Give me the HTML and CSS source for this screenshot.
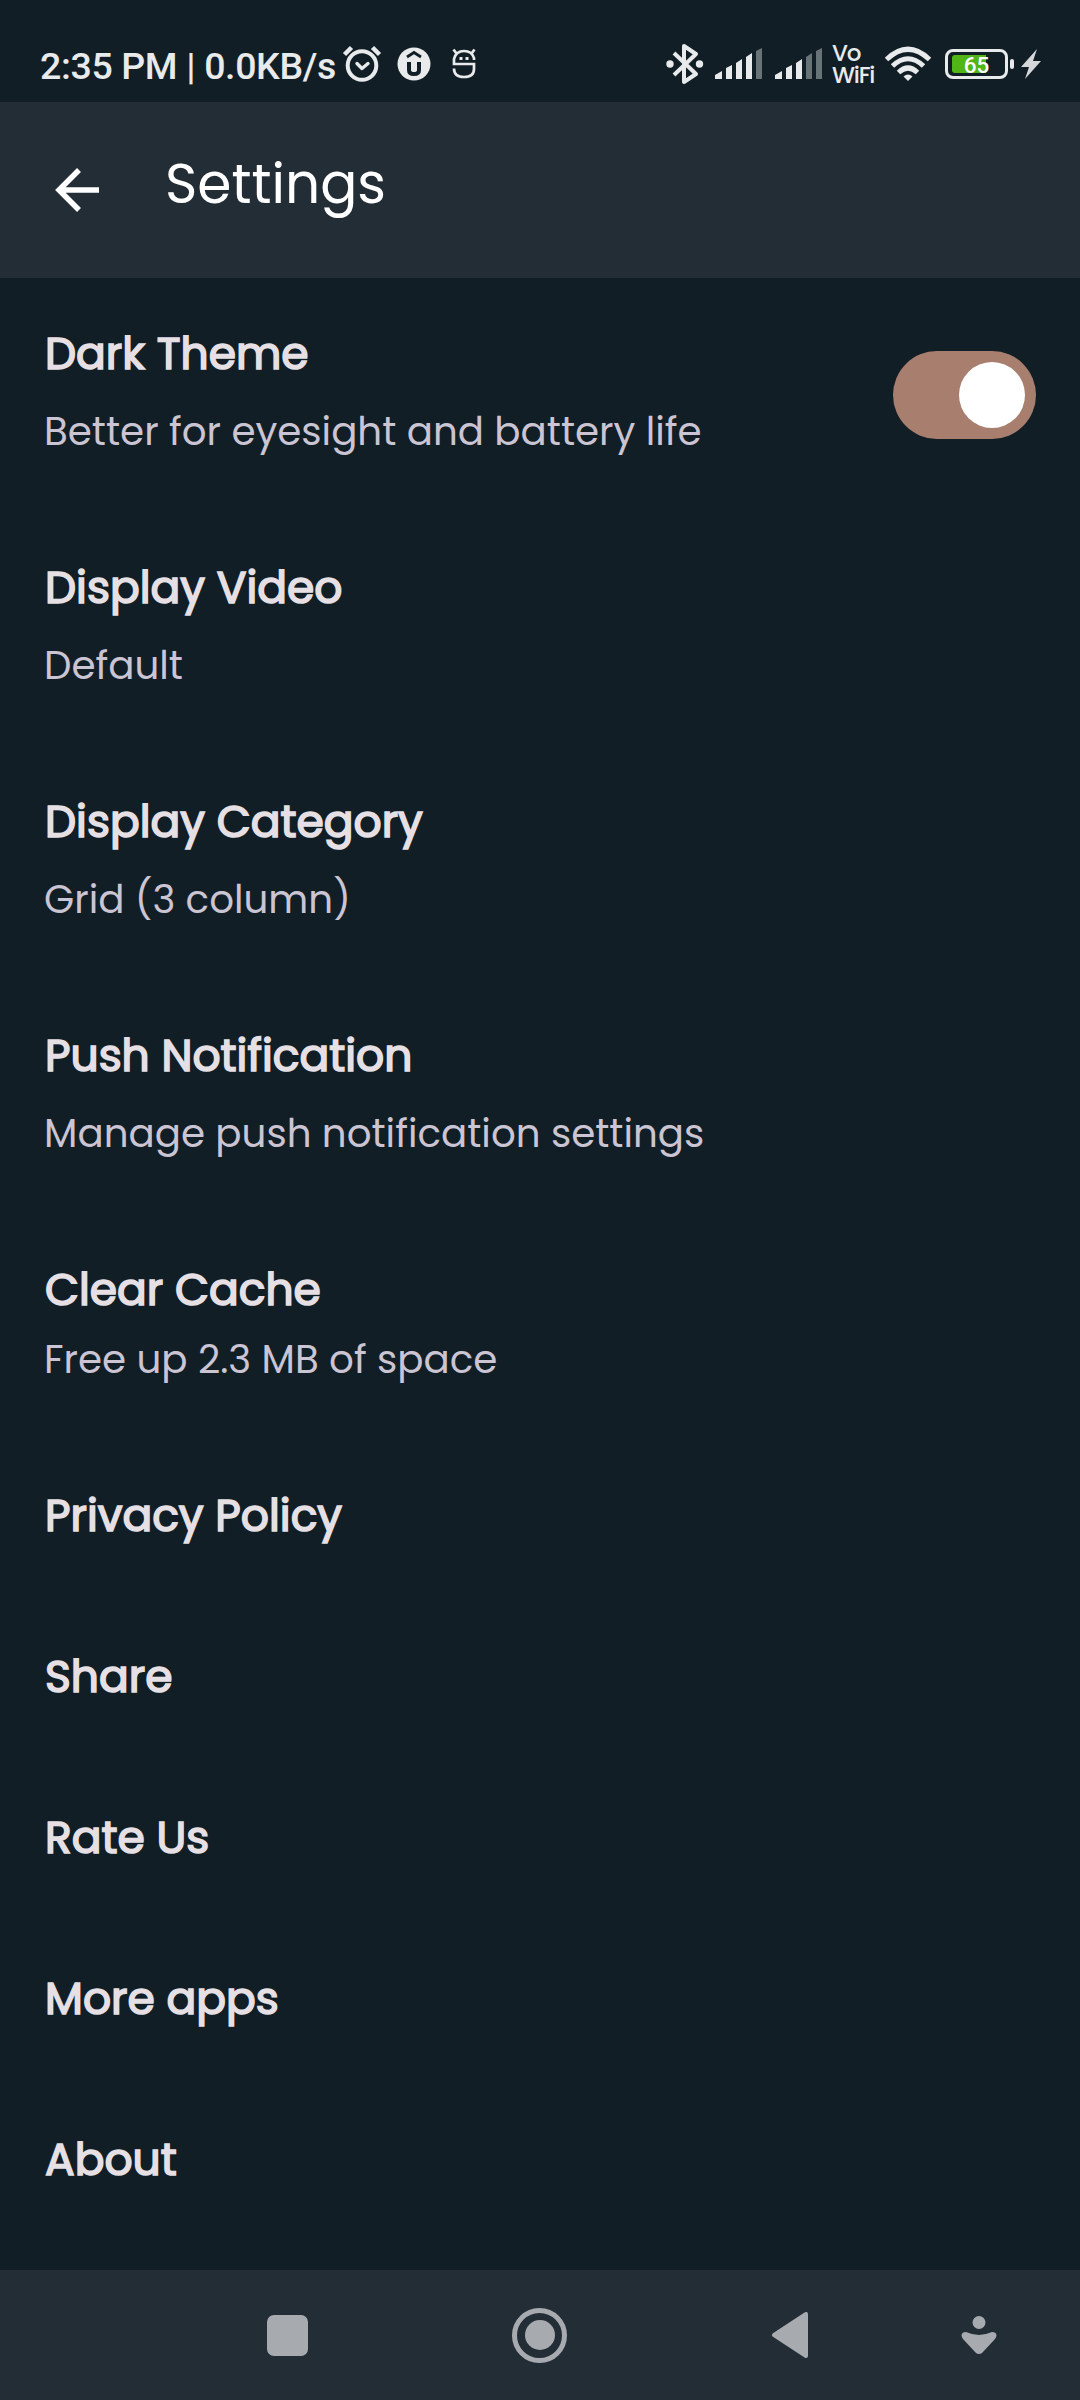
FILE: index.html
```html
<!DOCTYPE html>
<html lang="en">
<head>
<meta charset="utf-8">
<title>Settings</title>
<link rel="stylesheet" href="styles.css">
</head>
<body>
<div class="screen">
  <div class="status">
    <span class="clock">2:35 PM | 0.0KB/s</span>
    <svg class="alarm" width="40" height="40" viewBox="0 0 40 40" fill="none" stroke="#e8eaeb" stroke-linecap="round" stroke-linejoin="round"><circle cx="20" cy="21.500" r="14.300" stroke-width="4"/><path d="M2.500 10.500 9.500 3.500M37.500 10.500 30.500 3.500" stroke-width="4.500" stroke-linecap="butt"/><path d="m15 19.500 5 5 6-5" stroke-width="3.400"/></svg>
    <svg class="upload" width="34" height="34" viewBox="0 0 34 34"><circle cx="17" cy="17" r="16.500" fill="#e8eaeb"/><path d="M10 10 17 5.500l7 4.500" fill="none" stroke="#111e25" stroke-width="2.800"/><path d="M12 15v8q0 4 5 4t5-4v-8" fill="none" stroke="#111e25" stroke-width="4"/></svg>
    <svg class="bug" width="24" height="32" viewBox="0 0 24 32" fill="none" stroke="#e8eaeb" stroke-width="2.700"><path d="M22 12V10Q20 3 12 3T2 11v5h20v5q0 8-10 8T2 20.500M1.500 1.500l3 4M22.500 1.500l-3 4"/><path d="M7.500 10.500h3M13.500 10.500h3" stroke-width="3"/></svg>
    <span class="spacer"></span>
    <svg class="bt" width="38" height="42" viewBox="0 0 38 42" fill="none" stroke="#e8eaeb" stroke-width="4" stroke-linejoin="round"><path d="m8 10 22 21-12 8V3l12 8L8 32"/><circle cx="4" cy="21" r="3.700" fill="#e8eaeb" stroke="none"/><circle cx="33.500" cy="21" r="3.700" fill="#e8eaeb" stroke="none"/></svg>
    <svg class="sig" width="48" height="32" viewBox="0 0 48 32" fill="#e8eaeb"><path d="M0 27l7-4v8H0zM11 20l6-3v14h-6zM21 15l6-4v20h-6zM31 9l6-4v26h-6z"/><path d="M41 3l6-3v31h-6z" fill="#687378"/></svg>
    <svg class="sig2" width="48" height="32" viewBox="0 0 48 32" fill="#e8eaeb"><path d="M0 27l7-4v8H0zM11 20l6-3v14h-6zM21 15l6-4v20h-6z"/><path d="M31 9l6-4v26h-6zM41 3l6-3v31h-6z" fill="#687378"/></svg>
    <span class="vowifi"><span>Vo</span><span>WiFi</span></span>
    <svg class="wifi" width="48" height="36" viewBox="0 0 48 36" fill="none" stroke="#e8eaeb" stroke-width="5"><path d="M2.500 13.500Q24-7 45.500 13.500M8.500 20Q24 5.500 39.500 20M14.500 26.500Q24 17.500 33.500 26.500"/><path d="m24 35-4.500-4.500q4.500-4 9 0z" fill="#e8eaeb" stroke="none"/></svg>
    <span class="battery"><span class="level">65</span></span><span class="tip"></span>
    <svg class="bolt" width="20" height="30" viewBox="0 0 20 30" fill="#d5d7d8"><path d="M16 0 0 18h8L4 30 20 12h-8z"/></svg>
  </div>
  <header class="appbar">
    <svg width="44" height="44" viewBox="0 0 44 44" fill="none" stroke="#fff" stroke-width="5.500"><path d="M44 22H4M24 2 4 22l20 20"/></svg>
    <h1>Settings</h1>
  </header>
  <main class="list">
    <div class="item with-switch"><div><h2>Dark Theme</h2><p>Better for eyesight and battery life</p></div><span class="switch"><span class="knob"></span></span></div>
    <div class="item"><h2>Display Video</h2><p>Default</p></div>
    <div class="item"><h2>Display Category</h2><p>Grid (3 column)</p></div>
    <div class="item"><h2>Push Notification</h2><p>Manage push notification settings</p></div>
    <div class="item compact"><h2>Clear Cache</h2><p>Free up 2.3 MB of space</p></div>
    <div class="item single"><h2>Privacy Policy</h2></div>
    <div class="item single"><h2>Share</h2></div>
    <div class="item single"><h2>Rate Us</h2></div>
    <div class="item single"><h2>More apps</h2></div>
    <div class="item single"><h2>About</h2></div>
  </main>
  <nav class="nav">
    <span class="recent"></span>
    <span class="home"><span></span></span>
    <svg class="back" width="38" height="46" viewBox="0 0 38 46"><path d="M35 2v42L3 23z" fill="#a7abb0" stroke="#a7abb0" stroke-width="4" stroke-linejoin="round"/></svg>
    <svg class="hide" width="36" height="40" viewBox="0 0 36 40" fill="#a7abb0"><circle cx="18" cy="7.500" r="6.500"/><path d="M5 17q7 3 13 3t13-3q4 0 4.500 3 0 2-1.500 4L21.500 37.500q-3.500 3-7 0L2 24Q.5 22 .5 20 1 17 5 17z"/></svg>
  </nav>
</div>
</body>
</html>
```
FILE: styles.css
```css
* { box-sizing: border-box; }
body { margin: 0; background: #111e25; }
h1, h2, p { margin: 0; }
.screen { width: 1080px; height: 2400px; display: flex; flex-direction: column; background: #111e25; font-family: Poppins, Inter, sans-serif; overflow: hidden; }
.status { height: 102px; padding: 26px 39px 0 40px; display: flex; align-items: center; color: #e8eaeb; flex: none; font-family: Roboto, sans-serif; }
.status > * { flex: none; }
.status > .spacer { flex: 1; }
.clock { width: 302px; font-size: 37.500px; font-weight: 500; line-height: 44px; letter-spacing: -0.370px; white-space: nowrap; margin-top: 3px; }
.upload { margin-left: 15px; }
.bug { margin-left: 21px; }
.bt { margin-right: 11px; }
.sig { margin-right: 12px; }
.sig2 { margin-right: 9px; }
.vowifi { width: 42px; margin-right: 10px; display: flex; flex-direction: column; font: 500 23px/22px Poppins, Lato, sans-serif; letter-spacing: -1.200px; white-space: nowrap; }
.battery { width: 63px; height: 30px; border: 3px solid #e8eaeb; border-radius: 8px; padding: 3px 4px; margin-left: 13px; }
.level { display: block; height: 18px; border-radius: 3px; background: linear-gradient(90deg, #50b515 34px, transparent 34px); color: #fff; font-size: 22.500px; font-weight: 500; line-height: 20px; text-align: center; }
.tip { width: 4px; height: 10px; margin-left: 2px; border-radius: 2px; background: #e8eaeb; }
.bolt { margin-left: 7px; }
.appbar { height: 176px; padding: 0 55px; flex: none; display: flex; align-items: center; background: #232d35; color: #fff; }
.appbar h1 { margin-left: 66px; margin-top: -12px; font-size: 55px; font-weight: 400; line-height: 70px; }
.list { flex: 1; }
.item { height: 234px; padding: 45px 44px 0; }
.item h2 { padding-left: 1px; font-size: 44px; font-weight: 400; line-height: 61px; color: #e6e0e5; -webkit-text-stroke: 1.600px #e6e0e5; white-space: nowrap; }
.item p { margin-top: 18px; font-size: 38.800px; line-height: 60px; color: #cac4d3; white-space: nowrap; }
.with-switch { display: flex; justify-content: space-between; }
.compact { height: 226px; }
.item.compact p { margin-top: 10px; }
.single { height: 161px; }
.switch { width: 143px; height: 88px; margin-top: 28px; padding: 11px; border-radius: 44px; background: #a87f6f; display: flex; justify-content: flex-end; }
.knob { width: 66px; height: 66px; border-radius: 50%; background: #fff; }
.nav { height: 130px; flex: none; padding-left: 267px; display: flex; align-items: center; background: #232d35; }
.recent { width: 41px; height: 41px; border-radius: 7px; background: #a7abb0; }
.home { width: 55px; height: 55px; margin-left: 204px; border: 5px solid #a7abb0; border-radius: 50%; padding: 7.500px; }
.home span { display: block; width: 30px; height: 30px; border-radius: 50%; background: #a7abb0; }
.back { margin-left: 204px; }
.hide { margin-left: 152px; }
```
